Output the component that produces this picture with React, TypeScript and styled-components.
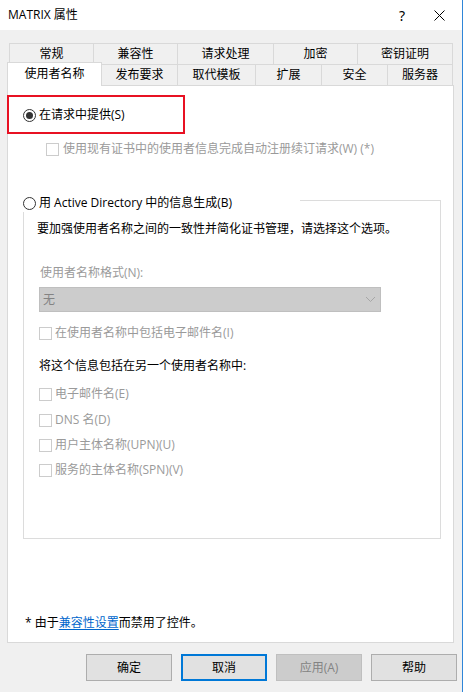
import React from "react";
import styled, { createGlobalStyle } from "styled-components";

const Global = createGlobalStyle`
  html, body { margin: 0; padding: 0; background: #ffffff; }
  body { font-family: "Open Sans", "Noto Sans CJK SC", sans-serif; font-size: 12px; color: #000; }
  * { box-sizing: border-box; }
`;

const Window = styled.div`
  width: 463px;
  height: 692px;
  display: flex;
  flex-direction: column;
  border-right: 1px solid #2f86d8;
  background: #f0f0f0;
`;

const TitleBar = styled.div`
  height: 30px;
  background: #ffffff;
  display: flex;
  align-items: center;
  padding-left: 8px;
`;

const Title = styled.div`
  flex: 1;
  font-size: 12px;
  line-height: 16px;
`;

const TitleButton = styled.div<{ $w: number }>`
  width: ${(p) => p.$w}px;
  height: 30px;
  display: flex;
  align-items: center;
  justify-content: center;
  font-family: "Noto Sans", sans-serif;
  font-size: 14px;
`;

const Body = styled.div`
  flex: 1;
  display: flex;
  flex-direction: column;
  padding: 13px 7px 0 7px;
`;

const TabRow = styled.div<{ $indent: number; $top: number; $h: number }>`
  display: flex;
  align-items: flex-end;
  margin-left: ${(p) => p.$indent}px;
  margin-top: ${(p) => p.$top}px;
  height: ${(p) => p.$h}px;
`;

const Tab = styled.div<{ $w: number; $selected?: boolean; $first?: boolean }>`
  width: ${(p) => p.$w}px;
  height: ${(p) => (p.$selected ? 24 : 21)}px;
  margin-left: ${(p) => (p.$first ? 0 : -1)}px;
  margin-bottom: ${(p) => (p.$selected ? -1 : 0)}px;
  border: 1px solid #d9d9d9;
  border-bottom: none;
  background: ${(p) => (p.$selected ? "#ffffff" : "#f0f0f0")};
  position: relative;
  z-index: ${(p) => (p.$selected ? 2 : 1)};
  display: flex;
  align-items: ${(p) => (p.$selected ? "flex-start" : "center")};
  padding-top: ${(p) => (p.$selected ? 3 : 0)}px;
  justify-content: center;
  font-size: 12px;
  line-height: 16px;
`;

const Panel = styled.div`
  width: 447px;
  height: 558px;
  background: #ffffff;
  border: 1px solid #d9d9d9;
  position: relative;
  display: flex;
  flex-direction: column;
`;

const Highlight = styled.div`
  position: absolute;
  left: -1px;
  top: 9px;
  width: 178px;
  height: 39px;
  border: 2px solid #e81123;
  pointer-events: none;
`;

const Line = styled.div<{ $top: number; $left: number; $muted?: boolean }>`
  display: flex;
  align-items: center;
  height: 16px;
  margin-top: ${(p) => p.$top}px;
  margin-left: ${(p) => p.$left}px;
  font-size: 12px;
  line-height: 16px;
  color: ${(p) => (p.$muted ? "#9a9a9a" : "#000")};
  white-space: nowrap;
`;

const RadioCircle = styled.span<{ $checked?: boolean }>`
  width: 13px;
  height: 13px;
  border-radius: 50%;
  border: 1px solid #333333;
  background: #ffffff;
  display: inline-flex;
  align-items: center;
  justify-content: center;
  margin-right: 3px;
  flex: none;
  &::after {
    content: "";
    width: 7px;
    height: 7px;
    border-radius: 50%;
    background: ${(p) => (p.$checked ? "#333333" : "transparent")};
  }
`;

const Box = styled.span<{ $gap: number }>`
  width: 13px;
  height: 13px;
  border: 1px solid #cccccc;
  background: #ffffff;
  margin-right: ${(p) => p.$gap}px;
  flex: none;
`;

const Group = styled.div`
  margin-left: 15px;
  margin-top: 37px;
  display: flex;
  flex-direction: column;
`;

const GroupHeader = styled.div`
  width: 277px;
  height: 18px;
  margin-bottom: -12px;
  background: #ffffff;
  position: relative;
  z-index: 1;
  display: flex;
  align-items: center;
  font-size: 12px;
  line-height: 16px;
  white-space: nowrap;
`;

const Frame = styled.div`
  width: 418px;
  border: 1px solid #dcdcdc;
  display: flex;
  flex-direction: column;
  padding-bottom: 60px;
`;

const Select = styled.div`
  margin-top: 6px;
  margin-left: 15px;
  width: 342px;
  height: 25px;
  background: #cccccc;
  border: 1px solid #bfbfbf;
  display: flex;
  align-items: center;
  justify-content: space-between;
  padding: 0 4px 0 3px;
  color: #838383;
  font-size: 12px;
  line-height: 16px;
`;

const Footer = styled.div`
  margin-top: auto;
  margin-bottom: 11px;
  margin-left: 17px;
  height: 16px;
  display: flex;
  align-items: center;
  font-size: 12px;
  line-height: 16px;
  white-space: nowrap;
`;

const Link = styled.span`
  color: #0066cc;
  text-decoration: underline;
  text-underline-offset: 2px;
`;

const Buttons = styled.div`
  display: flex;
  justify-content: flex-end;
  gap: 9px;
  margin-top: 11px;
  margin-right: -2px;
`;

const Button = styled.div<{ $variant?: "focus" | "disabled" }>`
  width: 86px;
  height: 27px;
  display: flex;
  align-items: center;
  justify-content: center;
  font-size: 12px;
  line-height: 16px;
  background: ${(p) => (p.$variant === "disabled" ? "#cccccc" : "#e1e1e1")};
  border: ${(p) =>
    p.$variant === "focus"
      ? "2px solid #0078d7"
      : p.$variant === "disabled"
      ? "1px solid #bfbfbf"
      : "1px solid #adadad"};
  color: ${(p) => (p.$variant === "disabled" ? "#838383" : "#000")};
`;

const row1 = [
  { label: "常规", w: 85 },
  { label: "兼容性", w: 85 },
  { label: "请求处理", w: 97 },
  { label: "加密", w: 85 },
  { label: "密钥证明", w: 96 },
];

const row2 = [
  { label: "使用者名称", w: 95, selected: true },
  { label: "发布要求", w: 77 },
  { label: "取代模板", w: 79 },
  { label: "扩展", w: 67 },
  { label: "安全", w: 67 },
  { label: "服务器", w: 66 },
];

const sanChecks = ["电子邮件名(E)", "DNS 名(D)", "用户主体名称(UPN)(U)", "服务的主体名称(SPN)(V)"];
const sanTops = [12, 10, 9, 9];

function Chevron() {
  return (
    <svg width="11" height="7" viewBox="0 0 11 7">
      <path d="M1 1 L5.5 5.5 L10 1" fill="none" stroke="#a6a6a6" strokeWidth="1" />
    </svg>
  );
}

function CloseIcon() {
  return (
    <svg width="11" height="11" viewBox="0 0 11 11">
      <path d="M0.5 0.5 L10.5 10.5 M10.5 0.5 L0.5 10.5" stroke="#000" strokeWidth="1" />
    </svg>
  );
}

export default function App() {
  return (
    <>
      <Global />
      <Window>
        <TitleBar>
          <Title>MATRIX 属性</Title>
          <TitleButton $w={28}>?</TitleButton>
          <TitleButton $w={46}>
            <CloseIcon />
          </TitleButton>
        </TitleBar>
        <Body>
          <TabRow $indent={2} $top={0} $h={21}>
            {row1.map((t, i) => (
              <Tab key={t.label} $w={t.w} $first={i === 0}>
                {t.label}
              </Tab>
            ))}
          </TabRow>
          <TabRow $indent={0} $top={-2} $h={23}>
            {row2.map((t, i) => (
              <Tab key={t.label} $w={t.w} $first={i === 0} $selected={t.selected}>
                {t.label}
              </Tab>
            ))}
          </TabRow>
          <Panel>
            <Highlight />
            <Line $top={21} $left={15}>
              <RadioCircle $checked />
              在请求中提供(S)
            </Line>
            <Line $top={18} $left={38} $muted>
              <Box $gap={4} />
              使用现有证书中的使用者信息完成自动注册续订请求(W) (*)
            </Line>
            <Group>
              <GroupHeader>
                <RadioCircle />
                用 Active Directory 中的信息生成(B)
              </GroupHeader>
              <Frame>
                <Line $top={20} $left={13}>
                  要加强使用者名称之间的一致性并简化证书管理，请选择这个选项。
                </Line>
                <Line $top={28} $left={16} $muted>
                  使用者名称格式(N):
                </Line>
                <Select>
                  <span>无</span>
                  <Chevron />
                </Select>
                <Line $top={13} $left={15} $muted>
                  <Box $gap={3} />
                  在使用者名称中包括电子邮件名(I)
                </Line>
                <Line $top={17} $left={15}>
                  将这个信息包括在另一个使用者名称中:
                </Line>
                {sanChecks.map((c, i) => (
                  <Line key={c} $top={sanTops[i]} $left={15} $muted>
                    <Box $gap={3} />
                    {c}
                  </Line>
                ))}
              </Frame>
            </Group>
            <Footer>
              *&nbsp;由于<Link>兼容性设置</Link>而禁用了控件。
            </Footer>
          </Panel>
          <Buttons>
            <Button>确定</Button>
            <Button $variant="focus">取消</Button>
            <Button $variant="disabled">应用(A)</Button>
            <Button>帮助</Button>
          </Buttons>
        </Body>
      </Window>
    </>
  );
}
